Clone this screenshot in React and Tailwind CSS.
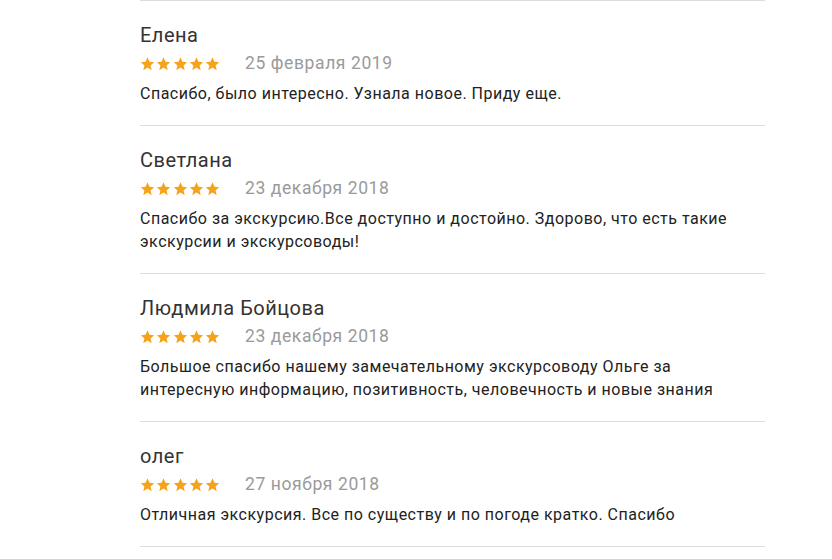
import React from "react";

const reviews = [
  { name: "Елена", date: "25 февраля 2019", text: "Спасибо, было интересно. Узнала новое. Приду еще." },
  { name: "Светлана", date: "23 декабря 2018", text: "Спасибо за экскурсию.Все доступно и достойно. Здорово, что есть такие экскурсии и экскурсоводы!" },
  { name: "Людмила Бойцова", date: "23 декабря 2018", text: "Большое спасибо нашему замечательному экскурсоводу Ольге за интересную информацию, позитивность, человечность и новые знания" },
  { name: "олег", date: "27 ноября 2018", text: "Отличная экскурсия. Все по существу и по погоде кратко. Спасибо" },
];

function Star() {
  return (
    <svg width="15" height="14" viewBox="1 1.5 22 21" className="shrink-0">
      <path fill="#f5a31a" d="M12 2l2.95 6.8 7.05.6-5.35 4.75 1.6 7.05L12 17.4l-6.25 3.8 1.6-7.05L2 9.4l7.05-.6z" />
    </svg>
  );
}

export default function App() {
  return (
    <div className="w-[832px] h-[559px] bg-white overflow-hidden" style={{ fontFamily: "Roboto, 'Noto Sans', sans-serif" }}>
      <div className="ml-[140px] w-[625px] border-b border-[#dcdcdc]">
        {reviews.map((r, i) => (
          <div key={i} className="border-t border-[#dcdcdc] pt-[22px] pb-[20px]">
            <div className="text-[20px] leading-[24px] tracking-[0.5px] text-[#333]">{r.name}</div>
            <div className="mt-[4px] flex items-center h-[24px]">
              <div className="flex w-[80px] gap-[1.25px] pt-[1px]">
                <Star /><Star /><Star /><Star /><Star />
              </div>
              <div className="ml-[25px] text-[17.5px] leading-[24px] tracking-[0.6px] text-[#9a9a9a]">{r.date}</div>
            </div>
            <div className="mt-[7px] text-[16px] leading-[23px] tracking-[0.5px] text-[#222] w-[600px]">{r.text}</div>
          </div>
        ))}
      </div>
    </div>
  );
}
